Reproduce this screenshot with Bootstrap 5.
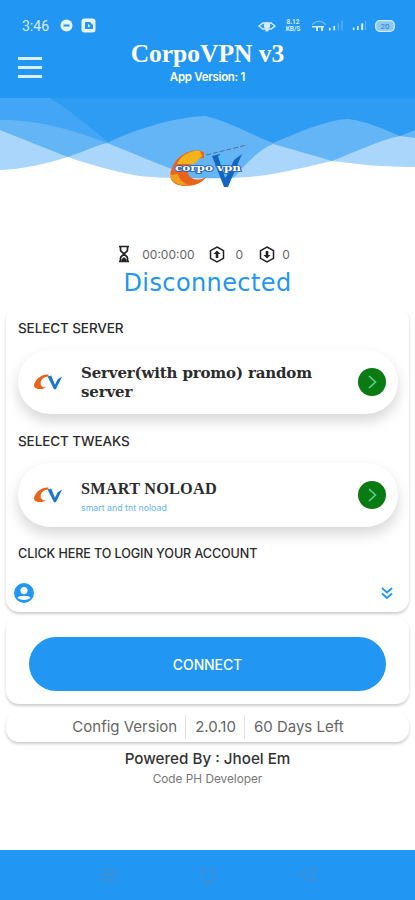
<!DOCTYPE html>
<html lang="en">
<head>
    <meta charset="UTF-8">
    <meta name="viewport" content="width=device-width, initial-scale=1.0">
    <title>CorpoVPN v3</title>
    <link href="https://cdn.jsdelivr.net/npm/bootstrap@5.3.0/dist/css/bootstrap.min.css" rel="stylesheet">
    <style>
        body {
            background: #fff;
            font-family: "DejaVu Sans", sans-serif;
            color: #222;
            height: 900px;
            overflow: hidden;
        }
        .app-screen {
            height: 900px;
        }
        .hero {
            display: grid;
            height: 194px;
        }
        .hero > * {
            grid-area: 1 / 1;
        }
        .hero-waves {
            width: 415px;
            height: 194px;
        }
        .status-line {
            height: 37px;
            padding: 14px 20px 0 22px;
            color: #d6ecfd;
        }
        .status-time {
            font: 14px Roboto, sans-serif;
            margin-right: 11px;
        }
        .status-speed {
            font: bold 6.5px/7px Roboto, sans-serif;
            text-align: center;
            width: 18px;
        }
        .menu-bars {
            width: 24px;
            margin-left: 18px;
            margin-top: 20px;
        }
        .menu-bars span {
            display: block;
            height: 3px;
            background: #dceffe;
            margin-bottom: 6px;
        }
        .hero-title {
            margin-left: -42px;
            padding-top: 3px;
        }
        .app-name {
            font: bold 25.5px/28px "Liberation Serif", serif;
            color: #fff;
            margin: 0;
        }
        .app-version {
            font: 600 11.5px/14px Inter, sans-serif;
            letter-spacing: -.3px;
            color: #fff;
            margin-top: 2px;
        }
        .hero-logo {
            align-self: end;
            justify-self: center;
            margin-bottom: 6px;
            width: 84px;
            height: 44px;
        }
        .logo-word {
            font: bold 8.5px "DejaVu Serif", serif;
            fill: #fff;
            stroke: #2a5fb0;
            stroke-width: 1.6px;
            paint-order: stroke;
        }
        .stats-line {
            margin-top: 50px;
            height: 20px;
            padding-right: 8px;
            font: 12px Inter, sans-serif;
            color: #666;
        }
        .stats-line svg {
            flex: none;
        }
        .stat-clock {
            margin-right: 11px;
        }
        .stat-up {
            margin: 0 11px 0 14px;
        }
        .stat-down {
            margin: 0 7px 0 16px;
        }
        .conn-state {
            font: 500 24px/26px "DejaVu Sans", sans-serif;
            color: #2196f3;
            text-align: center;
            margin-top: 6px;
            letter-spacing: .4px;
        }
        .panel-box {
            margin: 11px 6px 0;
            background: #fff;
            border-radius: 13px;
            box-shadow: 0 2px 3px rgba(0, 0, 0, .2);
        }
        .panel-select {
            height: 305px;
            padding: 13px 11px 0 12px;
        }
        .pick-label {
            font: 500 13.5px/16px Inter, sans-serif;
            letter-spacing: -.1px;
            color: #2b2b2b;
            height: 16px;
        }
        .pick-label.login-label {
            font-size: 12.6px;
            margin-top: 1px;
        }
        .pick-pill {
            height: 64px;
            margin: 14px 0 19px;
            padding-left: 14px;
            padding-right: 12px;
            border-radius: 32px;
            background: #fff;
            box-shadow: 0 7px 14px rgba(0, 0, 0, .16);
        }
        .pick-name {
            font: bold 15px/19px "DejaVu Serif", serif;
            color: #2c2c2c;
            letter-spacing: -.15px;
            padding-top: 2px;
        }
        .pick-name.tight {
            font: bold 16.3px/19px "Liberation Serif", serif;
            letter-spacing: .2px;
        }
        .pick-sub {
            font: 8.8px/10px Inter, sans-serif;
            color: #64b5f6;
            margin-top: 5px;
        }
        .pick-go {
            width: 28px;
            height: 28px;
            flex: none;
            border-radius: 50%;
            background: #0a7a12;
        }
        .account-line {
            margin: 21px 0 0 -4px;
            padding-right: 4px;
        }
        .panel-connect {
            margin-top: 5px;
            height: 87px;
            padding: 20px 23px 0;
        }
        .connect-btn {
            width: 100%;
            height: 54px;
            border: 0;
            border-radius: 27px;
            background: #2196f3;
            color: #fff;
            font: 500 14px Inter, sans-serif;
            letter-spacing: -.1px;
        }
        .panel-config {
            margin-top: 8px;
            height: 30px;
            font: 15px/30px Inter, sans-serif;
            color: #666;
        }
        .panel-config span {
            padding: 0 8px 0 9px;
            line-height: 24px;
        }
        .panel-config span + span {
            border-left: 1px solid #e3e3e3;
        }
        .powered-line {
            font: 500 15.2px/18px Inter, sans-serif;
            color: #333;
            text-align: center;
            margin-top: 8px;
        }
        .code-line {
            font: 11.8px/14px Inter, sans-serif;
            color: #777;
            text-align: center;
            margin-top: 4px;
        }
        .nav-strip {
            height: 50px;
            background: #2196f3;
            gap: 83px;
        }
    </style>
</head>
<body>
    <div class="app-screen d-flex flex-column">
        <div class="hero">
            <svg class="hero-waves" viewBox="0 0 415 194">
                <rect width="415" height="194" fill="#fff"/>
                <rect width="415" height="180" fill="#2f9cf4"/>
                <path d="M0 98H50C70 110 90 128 110 143H0Z" fill="#42a5f5"/>
                <path d="M0 120C30 119 70 128 107 143C125 134 165 118 205 116C225 120 250 134 273 143C300 132 325 120 348 119C370 122 385 130 400 136L415 130V180H0Z" fill="#64b5f6"/>
                <path d="M0 130C25 140 50 150 68 157C82 152 95 146 107 143C130 152 155 163 180 172L190 180H232C245 165 258 150 273 144C295 150 315 156 332 161C355 152 380 140 400 136L415 138V180H0Z" fill="#a9d6fa"/>
                <rect width="415" height="98" fill="#2196f3"/>
                <path d="M0 170C25 169 48 163 68 157C85 163 115 172 140 176C165 179 220 179 250 177C280 174 310 166 332 161C350 163 375 167 415 167V194H0Z" fill="#fff"/>
            </svg>
            <div>
                <div class="status-line d-flex align-items-center">
                    <span class="status-time">3:46</span>
                    <svg width="13" height="13" viewBox="0 0 13 13" class="me-2"><circle cx="6.5" cy="6.5" r="6" fill="#e8f4fe"/><rect x="3.5" y="5.5" width="6" height="2" fill="#2196f3"/></svg>
                    <svg width="15" height="15" viewBox="0 0 15 15"><rect x=".5" y=".5" width="14" height="14" rx="3" fill="#e8f4fe"/><path d="M4 4H9L12 7V11H4Z" fill="#2196f3"/><path d="M7 6L9.5 8L7 9.500Z" fill="#e8f4fe"/></svg>
                    <svg width="18" height="12" viewBox="0 0 18 12" class="ms-auto"><path d="M1 6L5 3H13L17 6L13 9H5Z" fill="none" stroke="#d6ecfd" stroke-width="1.4"/><circle cx="9" cy="5.500" r="3.200" fill="#d6ecfd"/><rect x="7.500" y="9" width="3" height="2.500" fill="#d6ecfd"/></svg>
                    <span class="status-speed ms-2">8.12<br>KB/S</span>
                    <svg width="18" height="13" viewBox="0 0 18 13" class="ms-2"><path d="M2 6C6 1 12 1 16 6" fill="none" stroke="#7cc1f8" stroke-width="1.200"/><rect x="2" y="7" width="12" height="1.500" fill="#d6ecfd"/><rect x="6" y="8" width="2" height="4" fill="#d6ecfd"/><rect x="11" y="8" width="2" height="4" fill="#d6ecfd"/></svg>
                    <svg width="16" height="13" viewBox="0 0 18 13"><rect x="1" y="9" width="2" height="3" fill="#d6ecfd"/><rect x="6" y="7" width="2" height="5" fill="#d6ecfd"/><rect x="11" y="4" width="1.500" height="8" fill="#5fb3f6"/><rect x="15" y="1" width="1.500" height="11" fill="#5fb3f6"/></svg>
                    <svg width="15" height="13" viewBox="0 0 18 13" class="ms-2"><rect x="1" y="9" width="2" height="3" fill="#d6ecfd"/><rect x="6" y="7" width="2" height="5" fill="#d6ecfd"/><rect x="11" y="4" width="2.500" height="8" fill="#d6ecfd"/><rect x="15.500" y="1" width="1.500" height="11" fill="#5fb3f6"/></svg>
                    <svg width="20" height="12" viewBox="0 0 20 12" class="ms-2"><rect x=".7" y=".7" width="18.600" height="10.600" rx="4" fill="#8cc9f9" stroke="#d6ecfd" stroke-width="1.300"/><text x="10" y="9" text-anchor="middle" font-size="8" font-family="Roboto" fill="#2f7fc4">20</text></svg>
                </div>
                <div class="d-flex">
                    <div class="menu-bars flex-shrink-0"><span></span><span></span><span></span></div>
                    <div class="hero-title flex-grow-1 text-center">
                        <h1 class="app-name">CorpoVPN v3</h1>
                        <div class="app-version">App Version: 1</div>
                    </div>
                </div>
            </div>
            <svg class="hero-logo" viewBox="0 0 84 44">
                <path d="M38 8C27 3 11 10 6 24C1 36 8 42 20 42C30 42 37 38 40 33C32 38 22 35 22 28C22 20 30 14 38 14Z" fill="#e8641b"/>
                <path d="M34 7C25 6 15 11 11 20H28L36 12Z" fill="#f6b21b"/>
                <path d="M4 31C5 38 12 42 23 41C17 39 13 35 12 30Z" fill="#f0a020"/>
                <path d="M46 12L58 43H62L76 10L68 16L60 33L54 10Z" fill="#1565c0"/>
                <path d="M52 12L59 34L61 31L56 10Z" fill="#4fc3f7"/>
                <path d="M40 11L81 1" stroke="#5a6f8c" stroke-width="1" stroke-dasharray="5 2" fill="none"/>
                <text class="logo-word" x="9" y="27" textLength="66" lengthAdjust="spacingAndGlyphs">corpo vpn</text>
            </svg>
        </div>

        <div class="stats-line d-flex align-items-center justify-content-center">
            <svg width="14" height="18" viewBox="0 0 14 18" class="stat-clock"><path d="M2 1.500H12M2 16.500H12M3.500 2V5C3.500 7 7 8 7 9C7 10 3.500 11 3.500 13V16M10.500 2V5C10.500 7 7 8 7 9C7 10 10.500 11 10.500 13V16" fill="none" stroke="#222" stroke-width="1.700"/><path d="M4.500 14.500L7 12L9.500 14.500V16H4.500Z" fill="#222"/></svg>
            <span>00:00:00</span>
            <svg width="16" height="17" viewBox="0 0 16 17" class="stat-up"><path d="M8 1L14.500 4.700V12.300L8 16L1.500 12.300V4.700Z" fill="none" stroke="#222" stroke-width="1.500"/><path d="M8 4.500L11.500 8H9.300V12H6.700V8H4.500Z" fill="#222"/></svg>
            <span>0</span>
            <svg width="16" height="17" viewBox="0 0 16 17" class="stat-down"><path d="M8 1L14.500 4.700V12.300L8 16L1.500 12.300V4.700Z" fill="none" stroke="#222" stroke-width="1.500"/><path d="M8 12.500L11.500 9H9.300V5H6.700V9H4.500Z" fill="#222"/></svg>
            <span>0</span>
        </div>
        <div class="conn-state">Disconnected</div>

        <div class="panel-box panel-select">
            <div class="pick-label">SELECT SERVER</div>
            <div class="pick-pill d-flex align-items-center">
                <svg width="33" height="22" viewBox="0 0 36 22" class="flex-shrink-0"><path d="M18 3C10 2 3 9 2 15C3 19 10 20 15 17C9 17 8 12 11 8C13 6 15 5 18 5Z" fill="#e8641b"/><path d="M17 5L24 19H26L33 5L28 8L25 14L21 4Z" fill="#1976d2"/></svg>
                <div class="pick-name ms-3 flex-grow-1">Server(with promo) random server</div>
                <div class="pick-go d-flex align-items-center justify-content-center"><svg width="14" height="16" viewBox="0 0 14 16"><path d="M4 2L10.500 8L4 14" fill="none" stroke="#55d39a" stroke-width="1.600"/></svg></div>
            </div>
            <div class="pick-label">SELECT TWEAKS</div>
            <div class="pick-pill d-flex align-items-center">
                <svg width="33" height="22" viewBox="0 0 36 22" class="flex-shrink-0"><path d="M18 3C10 2 3 9 2 15C3 19 10 20 15 17C9 17 8 12 11 8C13 6 15 5 18 5Z" fill="#e8641b"/><path d="M17 5L24 19H26L33 5L28 8L25 14L21 4Z" fill="#1976d2"/></svg>
                <div class="ms-3 flex-grow-1">
                    <div class="pick-name tight">SMART NOLOAD</div>
                    <div class="pick-sub">smart and tnt noload</div>
                </div>
                <div class="pick-go d-flex align-items-center justify-content-center"><svg width="14" height="16" viewBox="0 0 14 16"><path d="M4 2L10.500 8L4 14" fill="none" stroke="#55d39a" stroke-width="1.600"/></svg></div>
            </div>
            <div class="pick-label login-label">CLICK HERE TO LOGIN YOUR ACCOUNT</div>
            <div class="account-line d-flex align-items-center justify-content-between">
                <svg width="20" height="20" viewBox="0 0 20 20"><circle cx="10" cy="10" r="10" fill="#2196f3"/><circle cx="10" cy="7.500" r="3.500" fill="#fff"/><path d="M3.500 15C5 12 15 12 16.500 15C14 17.500 6 17.500 3.500 15Z" fill="#fff"/></svg>
                <svg width="14" height="14" viewBox="0 0 14 14"><path d="M2 2L7 6.500L12 2M2 7.500L7 12L12 7.500" fill="none" stroke="#2196f3" stroke-width="1.800"/></svg>
            </div>
        </div>

        <div class="panel-box panel-connect">
            <button class="connect-btn">CONNECT</button>
        </div>

        <div class="panel-box panel-config d-flex justify-content-center align-items-center">
            <span>Config Version</span><span>2.0.10</span><span>60 Days Left</span>
        </div>

        <div class="powered-line">Powered By : Jhoel Em</div>
        <div class="code-line">Code PH Developer</div>

        <div class="nav-strip d-flex align-items-center justify-content-center mt-auto">
            <svg width="16" height="14" viewBox="0 0 16 14"><path d="M1 2H15M1 7H15M1 12H15" stroke="#4b8fc6" stroke-width="1.300"/></svg>
            <svg width="16" height="16" viewBox="0 0 16 16"><rect x="1.500" y="1.500" width="13" height="13" rx="3.500" fill="none" stroke="#4b8fc6" stroke-width="1.300"/></svg>
            <svg width="16" height="18" viewBox="0 0 16 18"><path d="M14 2V16L2 9Z" fill="none" stroke="#4b8fc6" stroke-width="1.300" stroke-linejoin="round"/></svg>
        </div>
    </div>
    <script src="https://cdn.jsdelivr.net/npm/bootstrap@5.3.0/dist/js/bootstrap.bundle.min.js"></script>
</body>
</html>
